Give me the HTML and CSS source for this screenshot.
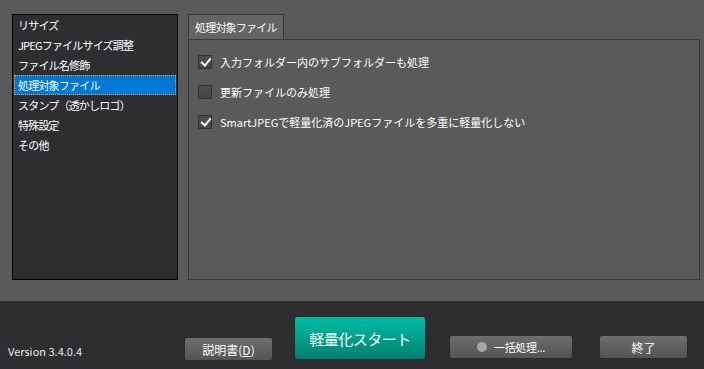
FILE: index.html
```html
<!DOCTYPE html>
<html lang="ja">
<head>
  <meta charset="UTF-8" />
  <title>設定</title>
  <link rel="stylesheet" href="styles.css">
</head>
<body>
  <div class="main">
    <ul class="menu">
      <li>リサイズ</li>
      <li>JPEGファイルサイズ調整</li>
      <li>ファイル名修飾</li>
      <li class="selected">処理対象ファイル</li>
      <li>スタンプ（透かしロゴ）</li>
      <li>特殊設定</li>
      <li>その他</li>
    </ul>

    <div class="tabs">
      <div class="tab">処理対象ファイル</div>
      <div class="panel">
        <label class="check"><span class="box checked"></span>入力フォルダー内のサブフォルダーも処理</label>
        <label class="check"><span class="box"></span>更新ファイルのみ処理</label>
        <label class="check"><span class="box checked"></span>SmartJPEGで軽量化済のJPEGファイルを多重に軽量化しない</label>
      </div>
    </div>
  </div>

  <div class="footer">
    <div class="version">Version 3.4.0.4</div>
    <button class="btn help">説明書(<u>D</u>)</button>
    <button class="start">軽量化スタート</button>
    <button class="btn batch"><span class="dot"></span>一括処理...</button>
    <button class="btn quit">終了</button>
  </div>
</body>
</html>
```

FILE: styles.css
```css
body {
  margin: 0;
  background: #5a5a5a;
  font-family: "Noto Sans CJK JP", "Noto Sans", sans-serif;
  font-size: 11px;
  color: #fff;
}
.main {
  display: flex;
  height: 301px;
  padding: 14px 0 0 12px;
  box-sizing: border-box;
}
.menu {
  list-style: none;
  margin: 0;
  padding: 0 1px;
  width: 166px;
  height: 266px;
  box-sizing: border-box;
  background: #2e2e30;
  border: 1px solid #000;
}
.menu li {
  height: 20px;
  line-height: 18px;
  padding-left: 3px;
  border: 1px dotted transparent;
  box-sizing: border-box;
  white-space: nowrap;
  letter-spacing: -0.8px;
}
.menu li.selected {
  background: #0078d7;
  border-color: #f0a040;
}
.tabs {
  margin-left: 10px;
  width: 512px;
  display: flex;
  flex-direction: column;
}
.tab {
  width: 96px;
  height: 25px;
  box-sizing: border-box;
  padding-left: 6px;
  line-height: 24px;
  white-space: nowrap;
  letter-spacing: -0.8px;
  background: #646464;
  border: 1px solid #3a3a3a;
  border-bottom: none;
}
.panel {
  height: 241px;
  box-sizing: border-box;
  border: 1px solid #3a3a3a;
  padding: 15px 0 0 9px;
  display: flex;
  flex-direction: column;
  gap: 16px;
}
.check {
  display: flex;
  align-items: center;
  height: 14px;
  line-height: 14px;
  white-space: nowrap;
}
.box {
  width: 14px;
  height: 14px;
  box-sizing: border-box;
  margin-right: 8px;
  border: 1px solid #333;
  background: linear-gradient(#4e4e4e, #444);
  position: relative;
}
.box.checked::after {
  content: "";
  position: absolute;
  left: 4px;
  top: 0;
  width: 4px;
  height: 8px;
  border: solid #fff;
  border-width: 0 2px 2px 0;
  transform: rotate(40deg);
}
.footer {
  height: 68px;
  background: #2e2e30;
  display: flex;
  align-items: flex-start;
  padding-left: 8px;
}
.version {
  width: 176px;
  margin-top: 42px;
  color: #e8e8e8;
}
button {
  font-family: inherit;
  color: #fff;
  border: 1px solid #2a2a2a;
  border-radius: 3px;
  cursor: pointer;
  padding: 0;
}
.btn {
  height: 24px;
  font-size: 12px;
  background: linear-gradient(#6e6e6e, #545454);
}
.help {
  width: 89px;
  margin-top: 36px;
}
.start {
  width: 132px;
  height: 44px;
  margin: 15px 0 0 21px;
  font-size: 15px;
  letter-spacing: -0.5px;
  background: linear-gradient(#00bea6, #00806f);
}
.batch {
  width: 124px;
  margin: 34px 0 0 23px;
  display: flex;
  align-items: center;
  justify-content: center;
  font-size: 11px;
  letter-spacing: -0.3px;
}
.dot {
  width: 10px;
  height: 10px;
  border-radius: 50%;
  background: #a8a8a8;
  margin-right: 7px;
}
.quit {
  width: 89px;
  margin: 34px 0 0 26px;
}
```
